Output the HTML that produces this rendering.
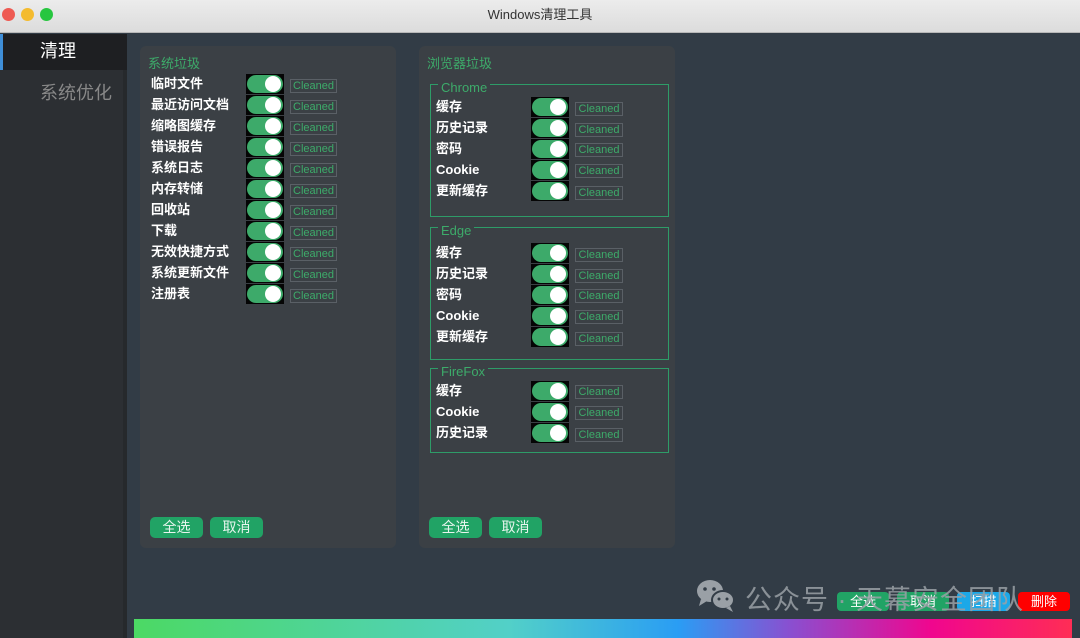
<!DOCTYPE html><html><head><meta charset="utf-8"><style>
*{margin:0;padding:0;box-sizing:border-box}
body{width:1080px;height:638px;overflow:hidden;background:#323c46;font-family:"Liberation Sans","Noto Sans CJK SC",sans-serif;position:relative}
.a{position:absolute}
.tb{left:0;top:0;width:1080px;height:33px;background:linear-gradient(#ececec,#dcdcdc);border-bottom:1px solid #b8b8b8;text-align:center;font-size:13px;line-height:30px;color:#333}
.dot{top:8px;width:13px;height:13px;border-radius:50%}
.side{left:0;top:34px;width:127px;height:604px;background:#2c2f33;border-right:4px solid #26292c}
.lab{font-size:13px;font-weight:bold;color:#fff;white-space:nowrap;line-height:16px}
.tg{width:38px;height:20px;background:#050505}
.tg i{position:absolute;left:1px;top:1px;width:36px;height:18px;border-radius:9px;background:#3daa6a}
.tg b{position:absolute;right:3px;top:2px;width:16px;height:16px;border-radius:50%;background:#fff}
.cl{height:14px;border:1px solid #5a6066;color:#3dab6a;font-size:11px;line-height:12px;text-align:center}
.pan{background:#3b4045;border-radius:6px}
.gb{border:1px solid #2e9c68}
.gt{color:#3dab6a;font-size:13px;background:#3b4045;padding:0 3px;line-height:14px}
.btn{height:21px;border-radius:5px;background:#21a365;color:#e8f5ee;font-size:14px;text-align:center;line-height:20px}
.sb{height:19px;border-radius:4px;color:#fff;font-size:13px;text-align:center;line-height:19px}
</style></head><body>
<div class="a tb">Windows清理工具</div>
<div class="a dot" style="left:2px;background:#ee5a52"></div>
<div class="a dot" style="left:21px;background:#f4bb2e"></div>
<div class="a dot" style="left:40px;background:#27c63f"></div>
<div class="a side"></div>
<div class="a" style="left:0;top:34px;width:127px;height:36px;background:#1e1f22"></div>
<div class="a" style="left:0;top:34px;width:3px;height:36px;background:#3f8ed8"></div>
<div class="a" style="left:40px;top:38px;font-size:18px;color:#fff;line-height:26px">清理</div>
<div class="a" style="left:40px;top:80px;font-size:18px;color:#888;line-height:26px">系统优化</div>

<div class="a pan" style="left:140px;top:46px;width:256px;height:502px"></div>
<div class="a pan" style="left:419px;top:46px;width:256px;height:502px"></div>
<div class="a" style="left:148px;top:53px;color:#3dab6a;font-size:13px">系统垃圾</div>
<div class="a" style="left:427px;top:53px;color:#3dab6a;font-size:13px">浏览器垃圾</div>

<div class="a gb" style="left:430px;top:84px;width:239px;height:133px"></div>
<div class="a gt" style="left:438px;top:81px">Chrome</div>
<div class="a gb" style="left:430px;top:227px;width:239px;height:133px"></div>
<div class="a gt" style="left:438px;top:224px">Edge</div>
<div class="a gb" style="left:430px;top:368px;width:239px;height:85px"></div>
<div class="a gt" style="left:438px;top:365px">FireFox</div>

<!-- system rows -->
<div class="a lab" style="left:151px;top:76px">临时文件</div><div class="a tg" style="left:246px;top:74px"><i></i><b></b></div><div class="a cl" style="left:290px;top:79px;width:47px">Cleaned</div>
<div class="a lab" style="left:151px;top:97px">最近访问文档</div><div class="a tg" style="left:246px;top:95px"><i></i><b></b></div><div class="a cl" style="left:290px;top:100px;width:47px">Cleaned</div>
<div class="a lab" style="left:151px;top:118px">缩略图缓存</div><div class="a tg" style="left:246px;top:116px"><i></i><b></b></div><div class="a cl" style="left:290px;top:121px;width:47px">Cleaned</div>
<div class="a lab" style="left:151px;top:139px">错误报告</div><div class="a tg" style="left:246px;top:137px"><i></i><b></b></div><div class="a cl" style="left:290px;top:142px;width:47px">Cleaned</div>
<div class="a lab" style="left:151px;top:160px">系统日志</div><div class="a tg" style="left:246px;top:158px"><i></i><b></b></div><div class="a cl" style="left:290px;top:163px;width:47px">Cleaned</div>
<div class="a lab" style="left:151px;top:181px">内存转储</div><div class="a tg" style="left:246px;top:179px"><i></i><b></b></div><div class="a cl" style="left:290px;top:184px;width:47px">Cleaned</div>
<div class="a lab" style="left:151px;top:202px">回收站</div><div class="a tg" style="left:246px;top:200px"><i></i><b></b></div><div class="a cl" style="left:290px;top:205px;width:47px">Cleaned</div>
<div class="a lab" style="left:151px;top:223px">下载</div><div class="a tg" style="left:246px;top:221px"><i></i><b></b></div><div class="a cl" style="left:290px;top:226px;width:47px">Cleaned</div>
<div class="a lab" style="left:151px;top:244px">无效快捷方式</div><div class="a tg" style="left:246px;top:242px"><i></i><b></b></div><div class="a cl" style="left:290px;top:247px;width:47px">Cleaned</div>
<div class="a lab" style="left:151px;top:265px">系统更新文件</div><div class="a tg" style="left:246px;top:263px"><i></i><b></b></div><div class="a cl" style="left:290px;top:268px;width:47px">Cleaned</div>
<div class="a lab" style="left:151px;top:286px">注册表</div><div class="a tg" style="left:246px;top:284px"><i></i><b></b></div><div class="a cl" style="left:290px;top:289px;width:47px">Cleaned</div>

<!-- chrome -->
<div class="a lab" style="left:436px;top:99px">缓存</div><div class="a tg" style="left:531px;top:97px"><i></i><b></b></div><div class="a cl" style="left:575px;top:102px;width:48px">Cleaned</div>
<div class="a lab" style="left:436px;top:120px">历史记录</div><div class="a tg" style="left:531px;top:118px"><i></i><b></b></div><div class="a cl" style="left:575px;top:123px;width:48px">Cleaned</div>
<div class="a lab" style="left:436px;top:141px">密码</div><div class="a tg" style="left:531px;top:139px"><i></i><b></b></div><div class="a cl" style="left:575px;top:143px;width:48px">Cleaned</div>
<div class="a lab" style="left:436px;top:162px">Cookie</div><div class="a tg" style="left:531px;top:160px"><i></i><b></b></div><div class="a cl" style="left:575px;top:164px;width:48px">Cleaned</div>
<div class="a lab" style="left:436px;top:183px">更新缓存</div><div class="a tg" style="left:531px;top:181px"><i></i><b></b></div><div class="a cl" style="left:575px;top:186px;width:48px">Cleaned</div>
<!-- edge -->
<div class="a lab" style="left:436px;top:245px">缓存</div><div class="a tg" style="left:531px;top:243px"><i></i><b></b></div><div class="a cl" style="left:575px;top:248px;width:48px">Cleaned</div>
<div class="a lab" style="left:436px;top:266px">历史记录</div><div class="a tg" style="left:531px;top:264px"><i></i><b></b></div><div class="a cl" style="left:575px;top:269px;width:48px">Cleaned</div>
<div class="a lab" style="left:436px;top:287px">密码</div><div class="a tg" style="left:531px;top:285px"><i></i><b></b></div><div class="a cl" style="left:575px;top:289px;width:48px">Cleaned</div>
<div class="a lab" style="left:436px;top:308px">Cookie</div><div class="a tg" style="left:531px;top:306px"><i></i><b></b></div><div class="a cl" style="left:575px;top:310px;width:48px">Cleaned</div>
<div class="a lab" style="left:436px;top:329px">更新缓存</div><div class="a tg" style="left:531px;top:327px"><i></i><b></b></div><div class="a cl" style="left:575px;top:332px;width:48px">Cleaned</div>
<!-- firefox -->
<div class="a lab" style="left:436px;top:383px">缓存</div><div class="a tg" style="left:531px;top:381px"><i></i><b></b></div><div class="a cl" style="left:575px;top:385px;width:48px">Cleaned</div>
<div class="a lab" style="left:436px;top:404px">Cookie</div><div class="a tg" style="left:531px;top:402px"><i></i><b></b></div><div class="a cl" style="left:575px;top:406px;width:48px">Cleaned</div>
<div class="a lab" style="left:436px;top:425px">历史记录</div><div class="a tg" style="left:531px;top:423px"><i></i><b></b></div><div class="a cl" style="left:575px;top:428px;width:48px">Cleaned</div>

<div class="a btn" style="left:150px;top:517px;width:53px">全选</div>
<div class="a btn" style="left:210px;top:517px;width:53px">取消</div>
<div class="a btn" style="left:429px;top:517px;width:53px">全选</div>
<div class="a btn" style="left:489px;top:517px;width:53px">取消</div>

<!-- watermark -->
<svg class="a" style="left:695px;top:578px" width="42" height="36" viewBox="0 0 42 36"><ellipse cx="15" cy="13" rx="13" ry="11" fill="#9aa0a6"/><path d="M6 21 L4 28 L12 23Z" fill="#9aa0a6"/><ellipse cx="28" cy="22" rx="11" ry="9" fill="#9aa0a6" stroke="#323c46" stroke-width="2"/><path d="M35 28 L38 34 L31 30Z" fill="#9aa0a6"/><circle cx="10" cy="11" r="1.8" fill="#323c46"/><circle cx="19" cy="11" r="1.8" fill="#323c46"/><circle cx="24" cy="21" r="1.5" fill="#323c46"/><circle cx="32" cy="21" r="1.5" fill="#323c46"/></svg>
<div class="a sb" style="left:837px;top:592px;width:52px;background:#21a365">全选</div>
<div class="a sb" style="left:897px;top:592px;width:52px;background:#21a365">取消</div>
<div class="a sb" style="left:957px;top:592px;width:53px;background:#1ba8e8">扫描</div>
<div class="a sb" style="left:1018px;top:592px;width:52px;background:#f00">删除</div>
<div class="a" style="left:745px;top:578px;font-size:27px;color:#9aa0a6;white-space:nowrap;letter-spacing:1px;opacity:.85">公众号 · 天幕安全团队</div>

<div class="a" style="left:134px;top:619px;width:938px;height:19px;background:linear-gradient(90deg,#4cd964,#52d0c8 40%,#2a9df4 58%,#8a4fd0 70%,#f0068e 85%,#ff2d55)"></div>
</body></html>
